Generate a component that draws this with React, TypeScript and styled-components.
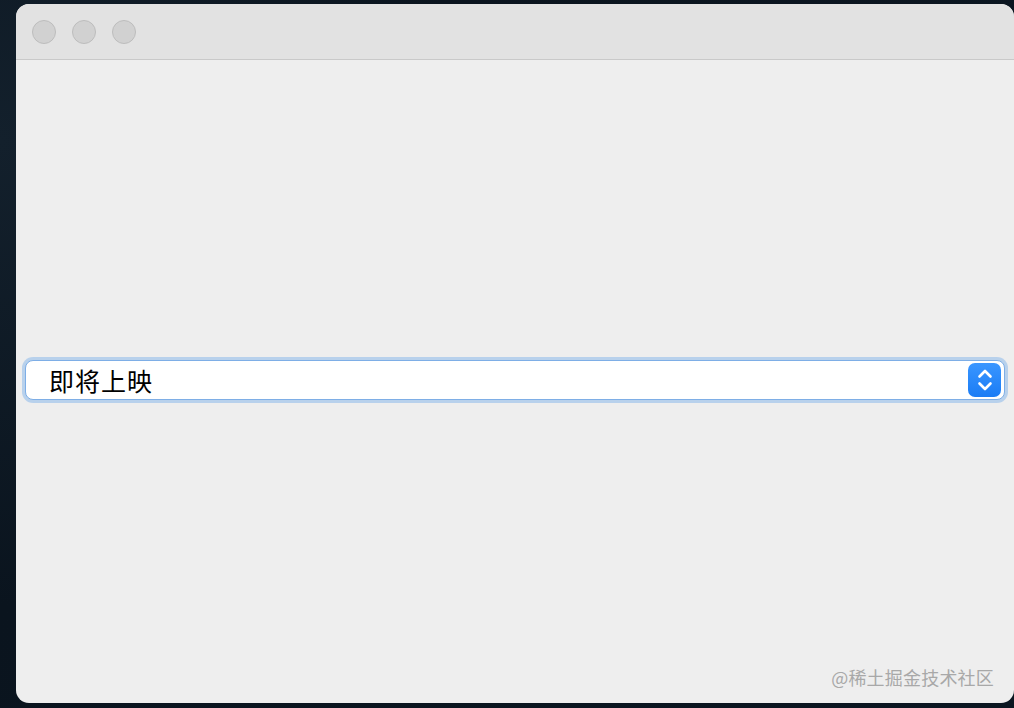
import React from 'react';
import styled, {createGlobalStyle} from "styled-components";

const GlobalStyle = createGlobalStyle`
  html, body {
    margin: 0;
    padding: 0;
    background: #0b1621;
    font-family: "Noto Sans CJK SC", "Noto Sans", sans-serif;
  }
`;

const Desktop = styled.div`
  width: 1014px;
  height: 708px;
  box-sizing: border-box;
  padding: 4px 0 5px 16px;
  background: radial-gradient(circle at 0 20%, #13202c 0, #0a141e 40%, #0b1621 100%);
  display: flex;
`;

const Window = styled.div`
  flex: 1;
  position: relative;
  display: flex;
  flex-direction: column;
  background: #eeeeee;
  border-radius: 13px;
  overflow: hidden;
`;

const TitleBar = styled.div`
  height: 55px;
  flex-shrink: 0;
  background: #e2e2e2;
  border-bottom: 1px solid #c9c9c9;
  display: flex;
  align-items: center;
  padding-left: 16px;
  gap: 16px;
`;

const Light = styled.span`
  width: 22px;
  height: 22px;
  border-radius: 50%;
  background: #d1d1d1;
  border: 1px solid #bdbdbd;
`;

const Content = styled.div`
  flex: 1;
  display: flex;
  align-items: center;
  padding: 0 9px 4px 9px;
`;

const SelectBox = styled.div`
  flex: 1;
  height: 40px;
  box-sizing: border-box;
  background: #ffffff;
  border: 1px solid #7eaee6;
  border-radius: 8px;
  box-shadow: 0 0 0 3px rgba(140, 185, 235, 0.55);
  display: flex;
  align-items: center;
  justify-content: space-between;
  padding: 0 3px 0 23px;
`;

const SelectText = styled.span`
  font-size: 25px;
  color: #000;
  letter-spacing: 1px;
`;

const Stepper = styled.span`
  width: 33px;
  height: 34px;
  border-radius: 7px;
  background: linear-gradient(#3a96ff, #1a7cf5);
  display: flex;
  align-items: center;
  justify-content: center;
`;

const Watermark = styled.span`
  position: absolute;
  right: 20px;
  bottom: 13px;
  font-size: 18px;
  color: #a8a8a8;
  letter-spacing: 0.2px;
`;

function App() {
    return (
        <Desktop>
            <GlobalStyle/>
            <Window>
                <TitleBar>
                    <Light/>
                    <Light/>
                    <Light/>
                </TitleBar>
                <Content>
                    <SelectBox>
                        <SelectText>即将上映</SelectText>
                        <Stepper>
                            <svg width="18" height="26" viewBox="0 0 18 26" fill="none" stroke="white"
                                 strokeWidth="2.6" strokeLinecap="round" strokeLinejoin="round">
                                <path d="M3.5 9.5 L9 4 L14.5 9.5"/>
                                <path d="M3.5 16.5 L9 22 L14.5 16.5"/>
                            </svg>
                        </Stepper>
                    </SelectBox>
                </Content>
                <Watermark>@稀土掘金技术社区</Watermark>
            </Window>
        </Desktop>
    );
}

export default App;
